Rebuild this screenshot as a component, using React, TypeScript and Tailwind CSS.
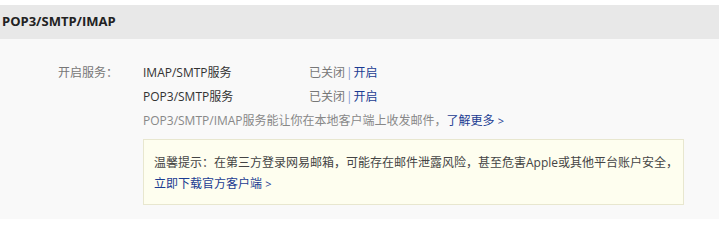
import React from "react";

export default function App() {
  const font = { fontFamily: '"Open Sans", "Noto Sans CJK SC", sans-serif' };
  return (
    <div className="w-[719px] h-[219px] bg-white overflow-hidden" style={font}>
      <div className="h-[5px] bg-white" />
      <div className="h-[34px] bg-[#e8e8e8] flex items-center pl-[2px] text-[13px] font-bold text-[#222]">
        POP3/SMTP/IMAP
      </div>
      <div className="h-[180px] bg-[#f9f9f9] pt-[22px]">
        <div className="flex">
          <div className="w-[118px] text-right text-[12px] leading-[24px] text-[#777]">开启服务：</div>
          <div className="ml-[25px] flex flex-col">
            <div className="flex text-[12px] leading-[24px]">
              <span className="w-[166px] text-[#333]">IMAP/SMTP服务</span>
              <span className="text-[#777]">已关闭</span>
              <span className="text-[#7b9bd1] mx-[1px]">|</span>
              <span className="text-[#1b3c92]">开启</span>
            </div>
            <div className="flex text-[12px] leading-[24px]">
              <span className="w-[166px] text-[#333]">POP3/SMTP服务</span>
              <span className="text-[#777]">已关闭</span>
              <span className="text-[#7b9bd1] mx-[1px]">|</span>
              <span className="text-[#1b3c92]">开启</span>
            </div>
            <div className="text-[12px] leading-[24px] text-[#888]">
              POP3/SMTP/IMAP服务能让你在本地客户端上收发邮件，
              <span className="text-[#1b3c92]">了解更多&nbsp;<span className="text-[11px]">&gt;</span></span>
            </div>
            <div className="mt-[6px] w-[541px] h-[66px] border border-[#e8e7cf] bg-[#fefeef] pl-[10px] pt-[12px] text-[12px] leading-[21px]">
              <div className="text-[#444] whitespace-nowrap">
                温馨提示：在第三方登录网易邮箱，可能存在邮件泄露风险，甚至危害Apple或其他平台账户安全，
              </div>
              <div className="text-[#1b3c92]">立即下载官方客户端&nbsp;<span className="text-[11px]">&gt;</span></div>
            </div>
          </div>
        </div>
      </div>
    </div>
  );
}
